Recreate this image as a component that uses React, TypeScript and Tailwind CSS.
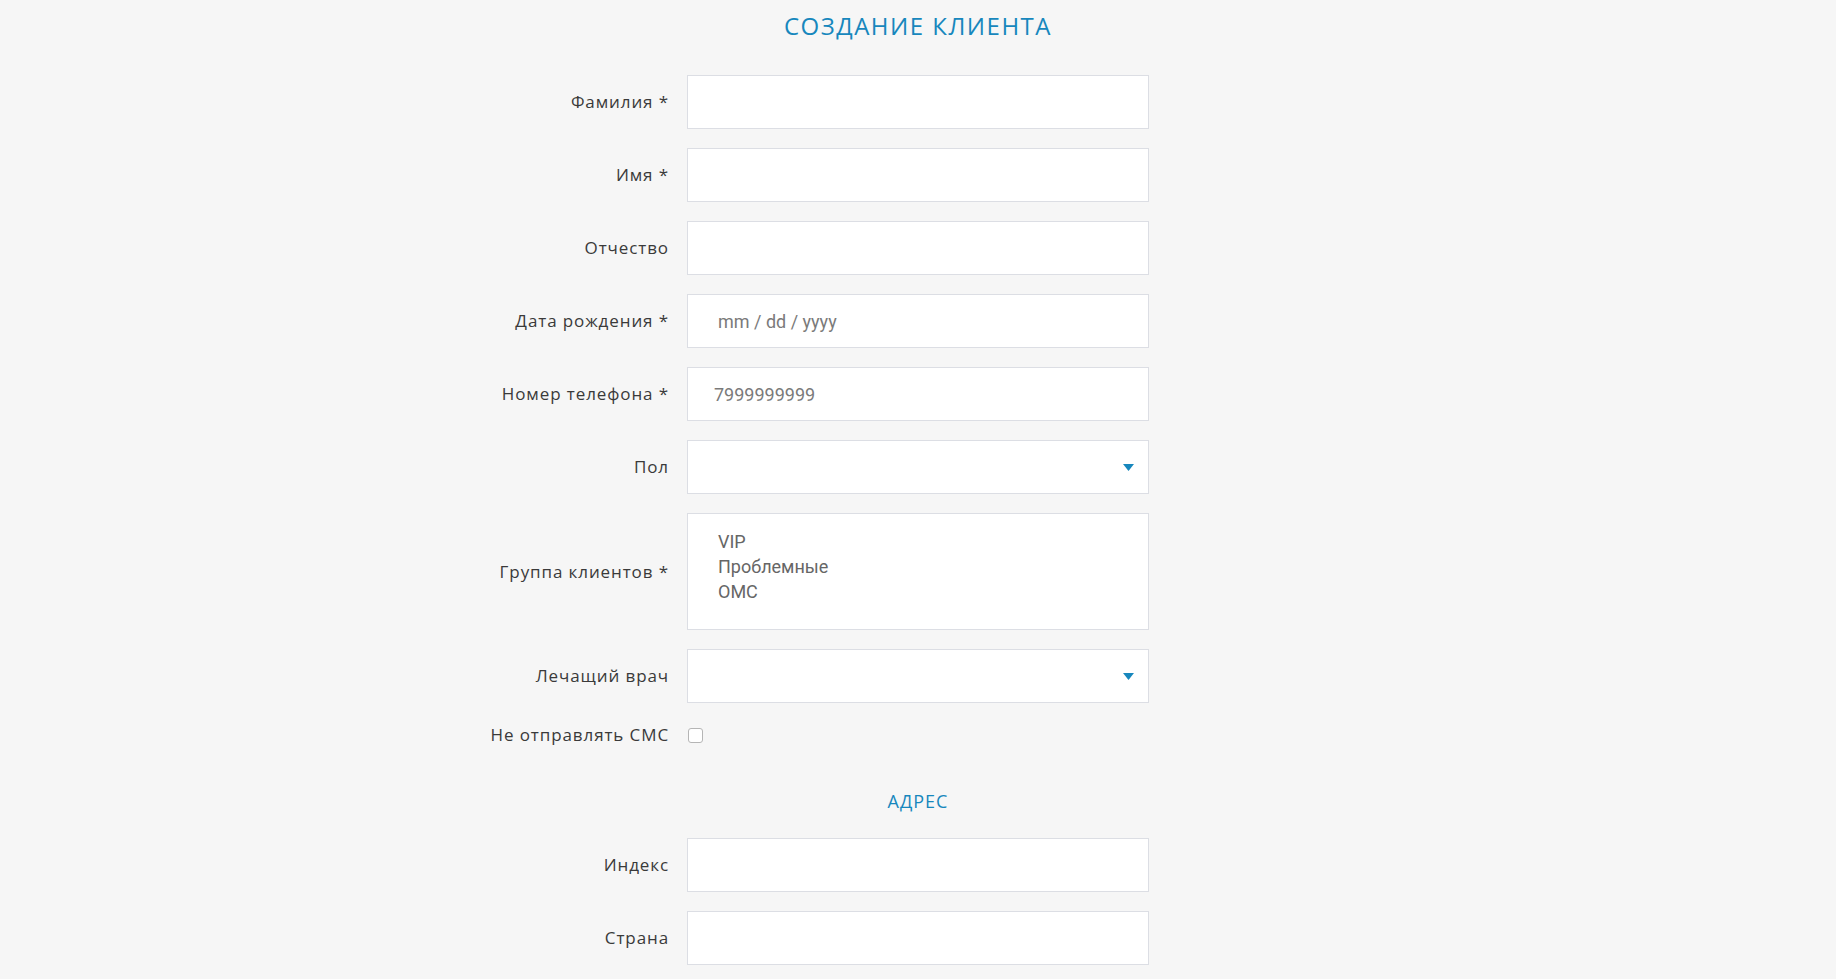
import React from "react";

const labelFont = { fontFamily: '"Open Sans", "DejaVu Sans", sans-serif' };

function Caret() {
  return (
    <svg width="11" height="7" viewBox="0 0 11 7" className="shrink-0">
      <path d="M0 0 L11 0 L5.5 7 Z" fill="#1787bd" />
    </svg>
  );
}

function Label({ children }: { children: React.ReactNode }) {
  return (
    <div className="flex items-center justify-end text-right text-[17px] tracking-[0.9px] text-[#3a3a3a]">
      {children}
    </div>
  );
}

function TextBox({ placeholder, pad = "pl-[26px]" }: { placeholder?: string; pad?: string }) {
  return (
    <div
      className={`h-[54px] border border-[#dcdee4] bg-white flex items-center ${pad} text-[18px] text-[#7a7a7a] font-['Roboto',sans-serif]`}
    >
      {placeholder}
    </div>
  );
}

function SelectBox() {
  return (
    <div className="h-[54px] border border-[#dcdee4] bg-white flex items-center justify-end pr-[14px]">
      <Caret />
    </div>
  );
}

export default function App() {
  const rows: { label: string; field: React.ReactNode }[] = [
    { label: "Фамилия *", field: <TextBox /> },
    { label: "Имя *", field: <TextBox /> },
    { label: "Отчество", field: <TextBox /> },
    { label: "Дата рождения *", field: <TextBox placeholder="mm / dd / yyyy" pad="pl-[30px]" /> },
    { label: "Номер телефона *", field: <TextBox placeholder="7999999999" /> },
    { label: "Пол", field: <SelectBox /> },
  ];

  return (
    <div className="min-h-screen bg-[#f6f6f6] pb-10" style={labelFont}>
      <h1 className="pt-[8px] text-center text-[24px] leading-[36px] text-[#1787bd] tracking-[1.5px]">
        СОЗДАНИЕ КЛИЕНТА
      </h1>

      <div className="mt-[31px] grid grid-cols-[1fr_462px_1fr] gap-x-[18px] gap-y-[19px]">
        {rows.map((r) => (
          <React.Fragment key={r.label}>
            <Label>{r.label}</Label>
            {r.field}
            <div />
          </React.Fragment>
        ))}

        <Label>Группа клиентов *</Label>
        <div className="h-[117px] border border-[#dcdee4] bg-white pl-[30px] pt-[15px] text-[18px] leading-[25px] text-[#666] font-['Roboto',sans-serif]">
          <div>VIP</div>
          <div>Проблемные</div>
          <div>ОМС</div>
        </div>
        <div />

        <Label>Лечащий врач</Label>
        <SelectBox />
        <div />

        <Label>Не отправлять СМС</Label>
        <div className="h-[26px] flex items-center pl-[1px]">
          <span className="w-[15px] h-[15px] rounded-[3px] border border-[#b5b5b5] bg-white" />
        </div>
        <div />

        <div />
        <div className="mt-[22px] mb-[6px] text-center text-[18px] leading-[24px] tracking-[1px] text-[#1787bd]">
          АДРЕС
        </div>
        <div />

        <Label>Индекс</Label>
        <TextBox />
        <div />

        <Label>Страна</Label>
        <TextBox />
        <div />
      </div>
    </div>
  );
}
